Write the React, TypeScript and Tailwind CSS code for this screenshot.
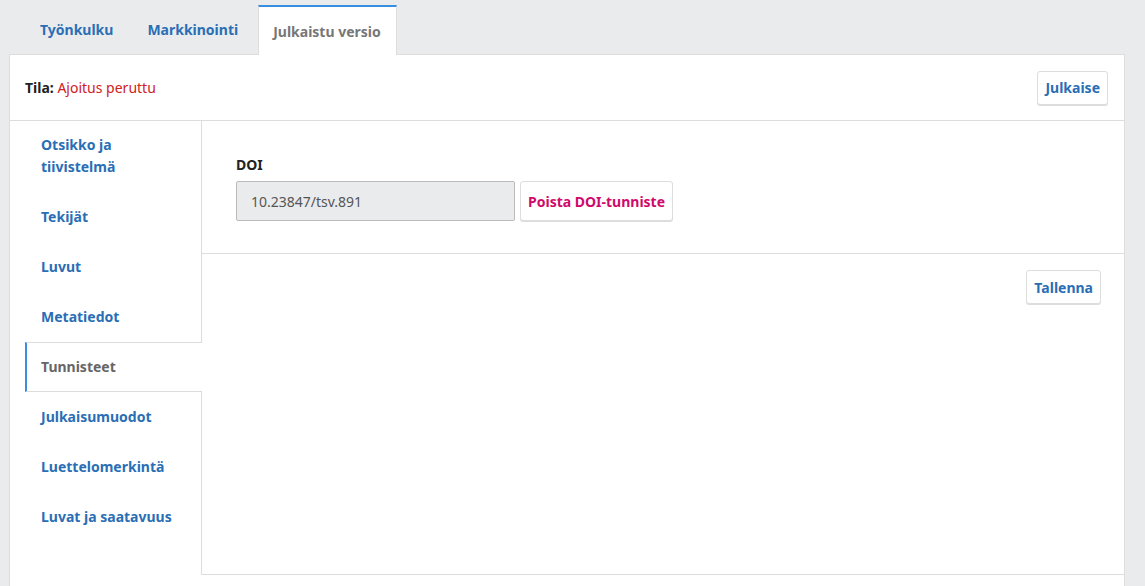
import React from "react";

const items = [
  "Otsikko ja tiivistelmä",
  "Tekijät",
  "Luvut",
  "Metatiedot",
  "Tunnisteet",
  "Julkaisumuodot",
  "Luettelomerkintä",
  "Luvat ja saatavuus",
];

export default function App() {
  return (
    <div
      className="bg-[#eaebed] text-[14px] text-[#222]"
      style={{ fontFamily: "'Noto Sans', 'Open Sans', sans-serif" }}
    >
      {/* Tabs */}
      <div className="flex pl-[25px] pt-[5px] gap-[4px]">
        <div className="h-[49px] px-[15px] flex items-center font-bold text-[#2a6eb5]">Työnkulku</div>
        <div className="h-[49px] px-[15px] flex items-center font-bold text-[#2a6eb5]">Markkinointi</div>
        <div className="relative z-10 ml-px h-[50px] -mb-px pl-[14px] pr-[15px] flex items-center font-bold text-[#777] bg-white border-t-2 border-t-[#3a8ee0] border-x border-x-[#dddddd]">
          Julkaistu versio
        </div>
      </div>

      {/* Card */}
      <div className="ml-[9px] mr-[20px] bg-white border border-[#dddddd] pb-[11px]">
        <div className="h-[66px] border-b border-[#dddddd] flex items-center justify-between pl-[15px] pr-[16px]">
          <div>
            <span className="font-bold">Tila:</span>{" "}
            <span className="text-[#d02020]">Ajoitus peruttu</span>
          </div>
          <button className="h-[34px] px-[7px] bg-white border border-[#dddddd] rounded-[3px] shadow-[0_1px_0_#dddddd] font-bold text-[#2a6eb5]">
            Julkaise
          </button>
        </div>

        <div className="flex">
          <div className="w-[191px] shrink-0 pl-[15px] -mt-px">
            {items.map((t) => {
              const active = t === "Tunnisteet";
              return (
                <div
                  key={t}
                  className={
                    active
                      ? "relative z-10 -mr-px bg-white border-l-2 border-l-[#3a8ee0] border-y border-y-[#dddddd] pl-[14px] pr-[10px] py-[13px] leading-[22px] font-bold text-[#666]"
                      : "border-l-2 border-l-transparent pl-[14px] pr-[10px] py-[14px] leading-[22px] font-bold text-[#2a6eb5]"
                  }
                >
                  {t === "Otsikko ja tiivistelmä" ? (
                    <>
                      Otsikko ja
                      <br />
                      tiivistelmä
                    </>
                  ) : (
                    t
                  )}
                </div>
              );
            })}
          </div>

          <div className="flex-1 h-[454px] border-l border-b border-[#dddddd]">
            <div className="h-[133px] border-b border-[#dddddd] pl-[34px] pt-[34px]">
              <div className="font-bold leading-5 mb-[6px]">DOI</div>
              <div className="flex gap-[5px]">
                <div className="w-[279px] h-[40px] bg-[#eaebed] border border-[#bbbbbb] rounded-[2px] flex items-center pl-[14px] text-[#555]">
                  10.23847/tsv.891
                </div>
                <button className="h-[40px] px-[7px] bg-white border border-[#dddddd] rounded-[3px] shadow-[0_1px_0_#dddddd] font-bold text-[#d00a6c]">
                  Poista DOI-tunniste
                </button>
              </div>
            </div>
            <div className="flex justify-end pt-[16px] pr-[23px]">
              <button className="h-[34px] px-[7px] bg-white border border-[#dddddd] rounded-[3px] shadow-[0_1px_0_#dddddd] font-bold text-[#2a6eb5]">
                Tallenna
              </button>
            </div>
          </div>
        </div>
      </div>
    </div>
  );
}
